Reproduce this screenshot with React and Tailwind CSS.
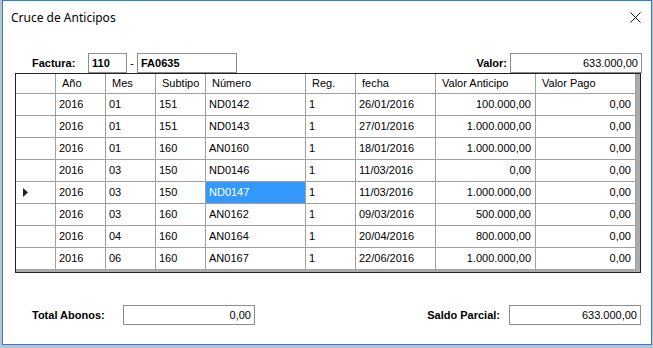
import React from "react";

const columns = [
  { key: "anio", label: "Año", w: "w-[50px]" },
  { key: "mes", label: "Mes", w: "w-[50px]" },
  { key: "subtipo", label: "Subtipo", w: "w-[50px]" },
  { key: "numero", label: "Número", w: "w-[100px]" },
  { key: "reg", label: "Reg.", w: "w-[50px]" },
  { key: "fecha", label: "fecha", w: "w-[80px]" },
  { key: "anticipo", label: "Valor Anticipo", w: "w-[100px]", right: true },
  { key: "pago", label: "Valor Pago", w: "w-[100px]", right: true },
];

const rows = [
  ["2016", "01", "151", "ND0142", "1", "26/01/2016", "100.000,00", "0,00"],
  ["2016", "01", "151", "ND0143", "1", "27/01/2016", "1.000.000,00", "0,00"],
  ["2016", "01", "160", "AN0160", "1", "18/01/2016", "1.000.000,00", "0,00"],
  ["2016", "03", "150", "ND0146", "1", "11/03/2016", "0,00", "0,00"],
  ["2016", "03", "150", "ND0147", "1", "11/03/2016", "1.000.000,00", "0,00"],
  ["2016", "03", "160", "AN0162", "1", "09/03/2016", "500.000,00", "0,00"],
  ["2016", "04", "160", "AN0164", "1", "20/04/2016", "800.000,00", "0,00"],
  ["2016", "06", "160", "AN0167", "1", "22/06/2016", "1.000.000,00", "0,00"],
];

const currentRow = 4;
const selectedCol = 3;

function Field({ className, right, bold, children }) {
  return (
    <div
      className={`h-[20px] border border-[#8c8c8c] bg-white flex items-center px-[3px] ${
        right ? "justify-end" : ""
      } ${bold ? "font-bold" : ""} ${className}`}
    >
      {children}
    </div>
  );
}

export default function App() {
  return (
    <div className="w-[653px] h-[348px] bg-[#b9c3cd] pl-[2px] pr-[1px] pb-[3px] font-['Liberation_Sans',Arial,sans-serif] text-[11px] text-black">
      <div className="w-[650px] h-[345px] border border-[#2b7fd4] bg-white flex flex-col">
        {/* title bar */}
        <div className="h-[33px] shrink-0 flex items-center justify-between pl-[8px] pr-[9px]">
          <span className="text-[12px] font-['Noto_Sans',sans-serif] text-black leading-none">
            Cruce de Anticipos
          </span>
          <svg width="11" height="11" viewBox="0 0 11 11" className="mr-[1px]">
            <path d="M0.5 0.5 L10.5 10.5 M10.5 0.5 L0.5 10.5" stroke="#111" strokeWidth="1" />
          </svg>
        </div>

        {/* factura row */}
        <div className="mt-[19px] h-[20px] flex items-center pl-[29px] pr-[9px]">
          <span className="font-bold w-[56px]">Factura:</span>
          <Field className="w-[39px]" bold>
            110
          </Field>
          <span className="w-[10px] text-center">-</span>
          <Field className="w-[100px]" bold>
            FA0635
          </Field>
          <div className="flex-1" />
          <span className="font-bold mr-[3px]">Valor:</span>
          <Field className="w-[132px]" right>
            633.000,00
          </Field>
        </div>

        {/* grid */}
        <div className="ml-[12px] w-[626px] border border-[#222] bg-[#ababab] flex flex-col">
          <div className="flex bg-white">
            <div className="w-[40px] h-[20px] border-r border-b border-[#a0a0a0]" />
            {columns.map((c) => (
              <div
                key={c.key}
                className={`${c.w} h-[20px] border-r border-b border-[#a0a0a0] flex items-center pl-[6px]`}
              >
                {c.label}
              </div>
            ))}
            <div className="w-[4px] bg-[#ababab]" />
          </div>
          {rows.map((r, i) => (
            <div key={i} className="flex bg-white">
              <div className="w-[40px] h-[22px] border-r border-b border-[#a0a0a0] flex items-center pl-[7px]">
                {i === currentRow && (
                  <svg width="5" height="9" viewBox="0 0 5 9">
                    <path d="M0 0 L5 4.5 L0 9 Z" fill="#222" />
                  </svg>
                )}
              </div>
              {columns.map((c, j) => {
                const sel = i === currentRow && j === selectedCol;
                return (
                  <div
                    key={c.key}
                    className={`${c.w} h-[22px] border-r border-b border-[#a0a0a0] flex items-center ${
                      c.right ? "justify-end pr-[4px]" : "pl-[3px]"
                    } ${sel ? "bg-[#3399ff] text-white" : ""}`}
                  >
                    {r[j]}
                  </div>
                );
              })}
              <div className="w-[4px] bg-[#ababab]" />
            </div>
          ))}
          <div className="h-[2px]" />
        </div>

        {/* totals row */}
        <div className="mt-[32px] h-[20px] flex items-center pl-[29px] pr-[10px]">
          <span className="font-bold w-[91px]">Total Abonos:</span>
          <Field className="w-[132px]" right>
            0,00
          </Field>
          <div className="flex-1" />
          <span className="font-bold mr-[9px]">Saldo Parcial:</span>
          <Field className="w-[132px]" right>
            633.000,00
          </Field>
        </div>
      </div>
    </div>
  );
}
